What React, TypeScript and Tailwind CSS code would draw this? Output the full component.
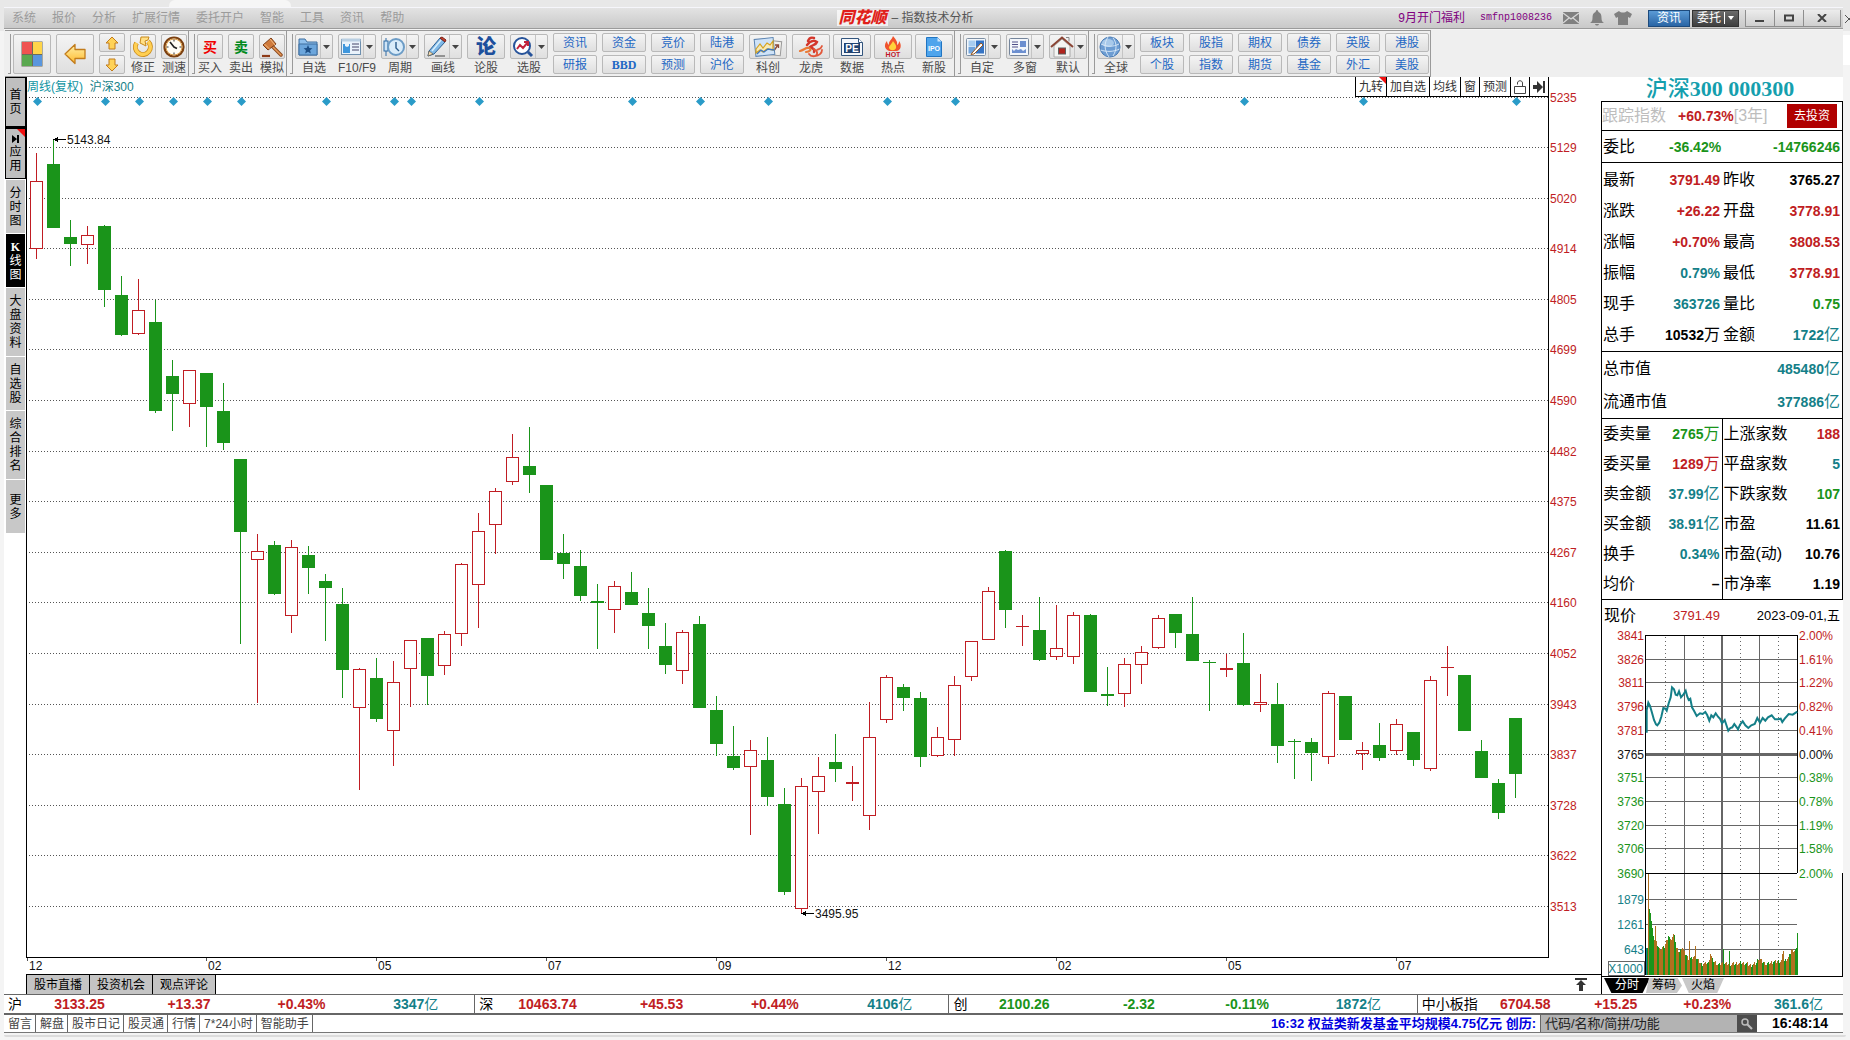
import type { ReactNode } from "react";

const CJK = "font-['Liberation_Sans','Noto_Sans_CJK_SC',sans-serif]";

/* ---------- data ---------- */

type Candle = ["R" | "G", number, number, number, number];

// colour, high, body top, body bottom, low
const candles: Candle[] = [
  ["R", 153, 181, 249, 259], ["G", 140, 164, 228, 228], ["G", 220, 237, 244, 266], ["R", 226, 235, 245, 264],
  ["G", 225, 226, 290, 307], ["G", 276, 295, 335, 336], ["R", 279, 310, 334, 335], ["G", 300, 322, 411, 413],
  ["G", 360, 376, 394, 431], ["R", 370, 370, 404, 427], ["G", 373, 373, 407, 447], ["G", 383, 411, 443, 450],
  ["G", 459, 459, 532, 644], ["R", 534, 551, 560, 703], ["G", 541, 545, 594, 595], ["R", 540, 547, 616, 633],
  ["G", 546, 555, 568, 594], ["G", 574, 581, 588, 641], ["G", 588, 604, 670, 698], ["R", 668, 669, 708, 790],
  ["G", 658, 678, 719, 722], ["R", 661, 682, 731, 766], ["R", 640, 640, 669, 707], ["G", 638, 638, 676, 705],
  ["R", 631, 634, 666, 675], ["R", 563, 564, 634, 646], ["R", 513, 531, 585, 628], ["R", 488, 491, 525, 554],
  ["R", 434, 457, 482, 485], ["G", 427, 466, 475, 493], ["G", 485, 485, 560, 560], ["G", 534, 553, 564, 579],
  ["G", 550, 566, 596, 601], ["G", 584, 601, 603, 649], ["R", 581, 586, 610, 633], ["G", 572, 592, 605, 605],
  ["G", 588, 613, 626, 649], ["G", 623, 646, 665, 674], ["R", 630, 632, 671, 684], ["G", 616, 624, 708, 708],
  ["G", 696, 710, 744, 756], ["G", 726, 756, 768, 770], ["R", 740, 750, 767, 835], ["G", 737, 760, 797, 806],
  ["G", 788, 804, 892, 895], ["R", 778, 786, 909, 913], ["R", 757, 776, 792, 834], ["G", 734, 762, 769, 782],
  ["R", 766, 782, 784, 801], ["R", 702, 737, 816, 830], ["R", 675, 677, 720, 723], ["G", 684, 687, 698, 711],
  ["G", 692, 698, 757, 767], ["R", 727, 737, 756, 757], ["R", 676, 685, 740, 756], ["R", 641, 641, 677, 681],
  ["R", 587, 591, 640, 640], ["G", 550, 551, 610, 628], ["R", 615, 626, 627, 646], ["G", 597, 630, 660, 661],
  ["R", 605, 648, 657, 660], ["R", 612, 615, 657, 664], ["G", 614, 615, 692, 692], ["G", 667, 694, 696, 706],
  ["R", 658, 664, 694, 707], ["R", 646, 652, 665, 684], ["R", 615, 618, 648, 649], ["G", 614, 614, 633, 648],
  ["G", 597, 634, 661, 661], ["G", 660, 662, 663, 711], ["R", 654, 668, 670, 677], ["G", 633, 663, 705, 706],
  ["R", 674, 702, 705, 712], ["G", 683, 704, 746, 763], ["G", 739, 741, 742, 779], ["G", 738, 742, 753, 781],
  ["R", 691, 693, 757, 764], ["G", 696, 696, 740, 740], ["R", 742, 750, 754, 770], ["G", 723, 745, 758, 761],
  ["R", 719, 724, 751, 755], ["G", 732, 732, 760, 766], ["R", 676, 680, 769, 771], ["R", 646, 667, 668, 696],
  ["G", 675, 675, 731, 731], ["G", 740, 751, 778, 778], ["G", 779, 783, 813, 819], ["G", 718, 718, 774, 798],
];

const gridLines: [number, string][] = [
  [97, "5235"], [147, "5129"], [198, "5020"], [248, "4914"], [299, "4805"], [349, "4699"], [400, "4590"],
  [451, "4482"], [501, "4375"], [552, "4267"], [602, "4160"], [653, "4052"], [704, "3943"], [754, "3837"],
  [805, "3728"], [855, "3622"], [906, "3513"],
];

const eventWeeks = [0, 4, 6, 8, 10, 12, 17, 21, 22, 26, 35, 39, 43, 50, 54, 71, 78, 87];

const months: [number, string][] = [
  [27, "12"], [206, "02"], [376, "05"], [546, "07"], [716, "09"], [886, "12"], [1056, "02"], [1226, "05"], [1396, "07"],
];

const menus = ["系统", "报价", "分析", "扩展行情", "委托开户", "智能", "工具", "资讯", "帮助"];

const RED = "text-[#c01d23]";
const GREEN = "text-[#1a941a]";
const TEAL = "text-[#147f88]";
const BLACK = "text-black";

/* ---------- toolbar icons ---------- */

function Svg({ children, w = 24, h = 22 }: { children: ReactNode; w?: number; h?: number }) {
  return (
    <svg width={w} height={h} viewBox={`0 0 ${w} ${h}`} fill="none" aria-hidden="true">
      {children}
    </svg>
  );
}

const Blocks = () => (
  <Svg w={22} h={26}>
    <rect x="0.5" y="0.5" width="21" height="25" fill="#6b6b5a" />
    <rect x="1" y="1" width="10" height="12" fill="#ef5350" />
    <rect x="12" y="1" width="9" height="12" fill="#ffd54a" />
    <rect x="1" y="14" width="10" height="11" fill="#5aa84f" />
    <rect x="12" y="14" width="9" height="11" fill="#5a96dd" />
  </Svg>
);
const ArrowLeft = () => (
  <Svg w={24} h={24}>
    <defs>
      <linearGradient id="gold" x1="0" y1="0" x2="0" y2="1">
        <stop offset="0" stopColor="#fff0a8" />
        <stop offset="1" stopColor="#ffba2e" />
      </linearGradient>
    </defs>
    <path d="M2 12 12 2.500v5h10v9H12v5z" fill="url(#gold)" stroke="#c27c1c" strokeWidth="1.300" strokeLinejoin="round" />
  </Svg>
);
const ArrowUp = () => (
  <Svg w={14} h={14}>
    <path d="M7 1 13 7h-3v6H4V7H1z" fill="#ffd257" stroke="#c27c1c" strokeLinejoin="round" />
  </Svg>
);
const ArrowDown = () => (
  <Svg w={14} h={14}>
    <path d="M7 13 1 7h3V1h6v6h3z" fill="#ffd257" stroke="#c27c1c" strokeLinejoin="round" />
  </Svg>
);
const Refresh = () => (
  <Svg w={22} h={22}>
    <path d="M4.500 7a7.500 7.500 0 1 0 11.500-1.500" stroke="#c98a1a" strokeWidth="5" />
    <path d="M4.500 7a7.500 7.500 0 1 0 11.500-1.500" stroke="#ffcf52" strokeWidth="3.400" />
    <path d="M9 1h8l-1 3-3 1 1 5-6-3z" fill="#ffdf86" stroke="#c98a1a" strokeLinejoin="round" />
  </Svg>
);
const Clock = () => (
  <Svg w={22} h={22}>
    <circle cx="11" cy="11" r="9.500" fill="#fffdf6" stroke="#7c4010" strokeWidth="2.200" />
    <circle cx="11" cy="11" r="8" stroke="#e0a04a" strokeWidth="1" />
    <path d="M11 3.500v2M11 16.500v2M3.500 11h2M16.500 11h2" stroke="#333" />
    <path d="M7 6l4 5 3 1.500" stroke="#222" strokeWidth="1.600" />
  </Svg>
);
const Gavel = () => (
  <Svg w={22} h={22}>
    <path d="m10 9 10 10" stroke="#8d4a20" strokeWidth="3.500" strokeLinecap="round" />
    <path d="m10 9 10 10" stroke="#e79a57" strokeWidth="1.500" strokeLinecap="round" />
    <path d="m2 9 8-7 5 6-8 6z" fill="#cf7a3c" stroke="#7f3f18" strokeLinejoin="round" />
    <path d="m3.500 8 5 5M9 3l5 6" stroke="#f3bd83" />
    <path d="M1 20h8" stroke="#8d3b18" strokeWidth="2.200" />
  </Svg>
);
const Folder = () => (
  <Svg w={20} h={20}>
    <path d="M1 2h6l2 3h10v13H1z" fill="#8fc0ec" stroke="#3f6f9f" />
    <path d="M1 7h18v11H1z" fill="#6ca6dc" stroke="#3f6f9f" />
    <path d="m10 8 1.300 2.900 3.100.300-2.300 2.100.700 3.100-2.800-1.600-2.800 1.600.700-3.100-2.300-2.100 3.100-.300z" fill="#1d4f86" />
  </Svg>
);
const Report = () => (
  <Svg w={20} h={20}>
    <rect x="0.500" y="2.500" width="19" height="15" fill="#eaf3fb" stroke="#6d8fae" />
    <rect x="0.500" y="1.500" width="19" height="3" fill="#b9cfe2" />
    <path d="M2 7h2v2l2 1 2-1V7h1v9H2z" fill="#3f97dd" />
    <path d="M11 7h7M11 10h7M11 13h7" stroke="#446" />
  </Svg>
);
const Period = () => (
  <Svg w={22} h={20}>
    <path d="M3 1v18" stroke="#2d6ba5" />
    <rect x="1" y="4" width="4" height="10" fill="#cfe4f6" stroke="#2d6ba5" />
    <circle cx="13" cy="10" r="8" fill="#d9ecfa" stroke="#6c9cc6" strokeWidth="2" />
    <path d="M13 5v6l3 3" stroke="#2b5c8c" strokeWidth="1.400" />
  </Svg>
);
const Pencil = () => (
  <Svg w={22} h={22}>
    <path d="M3 15 14 2l5 4L8 18l-6 2z" fill="#7fb9e8" stroke="#2d5f92" />
    <path d="m14 2 2-1 4 3-1 2z" fill="#c8402d" stroke="#7b2318" />
    <path d="M3 15 2 20l5-2z" fill="#f5deb4" stroke="#60513a" strokeWidth="0.600" />
    <path d="m6 15 9-11" stroke="#d9effc" strokeWidth="1.500" />
    <path d="M9 20h10" stroke="#444" />
  </Svg>
);
const Magnify = () => (
  <Svg w={22} h={22}>
    <circle cx="10" cy="10" r="8" fill="#fff" stroke="#27539a" strokeWidth="2" />
    <path d="m16 16 4 4" stroke="#27539a" strokeWidth="3" />
    <path d="m5 13 3-4 3 3 5-6M12 6h4v4" stroke="#c2233c" strokeWidth="2" />
  </Svg>
);
const Charts = () => (
  <Svg w={30} h={22}>
    <rect x="14" y="5" width="14" height="14" transform="rotate(6 21 12)" fill="#f2f0ec" stroke="#999" />
    <path d="m20 16 5-7M22 9h3.500v3" stroke="#8b4a3a" strokeWidth="1.300" />
    <rect x="2" y="2.500" width="19" height="17" transform="rotate(-6 11 11)" fill="#cfe3f8" stroke="#5b83b0" />
    <path d="m3 13 4-5 3 4 4-5 3 2 3-4v9l-6-1-4 3-3-2-4 3z" fill="#f6eab8" stroke="#d7a21d" strokeWidth="1.200" />
    <path d="m4 18 4-4 3 2 4-3 6 1" stroke="#3f76bc" strokeWidth="1.300" />
  </Svg>
);
const Dragon = () => (
  <Svg w={28} h={22}>
    <path d="M11 5c1-3 3-4 6-3M10 9c3-4 7-5 10-3-1 3-5 3-7 5 3 1 5 3 4 5" stroke="#d3362b" strokeWidth="2.400" strokeLinecap="round" />
    <path d="M3 15c4-1 6-4 9-3s1 4-3 4" stroke="#ea7a35" strokeWidth="2.200" strokeLinecap="round" />
    <path d="M12 18c2 3 7 3 8 0s-2-4-3-5M20 14c2-1 4-1 5-4M18 20c4 0 7-3 7-6" stroke="#e2573a" strokeWidth="1.800" strokeLinecap="round" />
  </Svg>
);
const PE = () => (
  <Svg w={24} h={20}>
    <path d="M1.500 1.500h17l4 4v13h-21z" fill="#f4f7fb" stroke="#33557d" />
    <path d="M18.500 1.500v4h4" fill="#fff" stroke="#33557d" />
    <rect x="4" y="6" width="16" height="10" fill="#1f4270" />
    <text x="12" y="14.500" fontSize="10" fontWeight="700" fill="#fff" textAnchor="middle" fontFamily="Liberation Sans">PE</text>
  </Svg>
);
const Hot = () => (
  <Svg w={22} h={22}>
    <path d="M11 0c2 3 5 5 4 9 2-1 2-3 2-4 3 4 2 9-2 10H7C2 13 2 8 5 5c0 2 1 3 2 4C6 5 10 4 11 0z" fill="#f0532d" />
    <path d="M11 5c1 2 4 4 3 7-1 3-6 3-7 0-.500-2 3-4 4-7z" fill="#ffd23a" />
    <text x="11" y="21" fontSize="7" fontWeight="700" fill="#c0182a" textAnchor="middle" fontFamily="Liberation Sans">HOT</text>
  </Svg>
);
const Ipo = () => (
  <Svg w={18} h={22}>
    <path d="M1.500 1.500h11l4 4v15h-15z" fill="#4ea4ec" stroke="#2175c2" />
    <path d="M12.500 1.500v4h4z" fill="#cbe5fb" />
    <text x="9" y="15" fontSize="7" fontWeight="700" fill="#fff" textAnchor="middle" fontFamily="Liberation Sans">IPO</text>
  </Svg>
);
const Custom = () => (
  <Svg w={20} h={20}>
    <rect x="0.500" y="1.500" width="19" height="17" rx="1" fill="#f3f7fb" stroke="#7c8ea3" />
    <rect x="2.500" y="3.500" width="7" height="6" fill="#a8cdf0" />
    <rect x="10" y="3.500" width="8" height="13" fill="#3674c4" />
    <rect x="2.500" y="10" width="7" height="6.500" fill="#6fa3dd" />
    <path d="m6 16 9-10 2 2-9 9-3 .500z" fill="#fff" stroke="#9a5a22" />
  </Svg>
);
const Windows = () => (
  <Svg w={20} h={20}>
    <rect x="0.500" y="1.500" width="19" height="17" rx="1" fill="#f3f6fb" stroke="#75859b" />
    <path d="M3 5h6M3 7.500h6M3 10h6" stroke="#50508a" />
    <rect x="11" y="4" width="6" height="6" fill="#6c8fd0" />
    <path d="M3 16v-4l2 2 2-2 2 1 3-1 2 2 3-2v4z" fill="#6c8fd0" />
  </Svg>
);
const House = () => (
  <Svg w={24} h={22}>
    <path d="M4 10v11h16V10l-8-7z" fill="#f4f4f2" stroke="#aaa" />
    <path d="M1 11 12 1.500 23 11" stroke="#8a4434" strokeWidth="2" />
    <path d="M16 1.500h3v4" stroke="#888" />
    <rect x="8.500" y="12" width="7" height="6" fill="#b0231c" stroke="#5e5e5e" />
  </Svg>
);
const Globe = () => (
  <Svg w={22} h={22}>
    <circle cx="11" cy="11" r="10" fill="#6d9dd3" stroke="#4a7cb5" />
    <ellipse cx="9" cy="7" rx="6" ry="4" fill="#a8c9ea" />
    <path d="M2 8c6 3 12 3 18 0M1.500 14c6 2 13 2 19-1M9 1c-4 6-4 13 1 20M14 1.500c4 6 4 12 0 18.500" stroke="#dcebf8" strokeWidth="0.900" />
  </Svg>
);

/* ---------- toolbar parts ---------- */

const face = "border border-[#b9b9b9] rounded-[2px] bg-linear-to-b from-[#f4f4f4] to-[#dfdfdf] flex items-center justify-center";

function Tool({ label, icon, drop, narrow }: { label: string; icon: ReactNode; drop?: boolean; narrow?: boolean }) {
  return (
    <button className={`flex flex-col items-center ${narrow ? "w-[26px]" : "w-[38px]"}`}>
      <span className={`${face} h-[25px] w-full`}>
        <span className="flex flex-1 items-center justify-center">{icon}</span>
        {drop && (
          <span className="flex h-full w-3 items-center justify-center border-l border-[#c4c4c4]">
            <svg width="7" height="4" viewBox="0 0 7 4" aria-hidden="true"><path d="M0 0h7L3.500 4z" fill="#444" /></svg>
          </span>
        )}
      </span>
      <span className="mt-[3px] whitespace-nowrap text-xs leading-3 text-[#4a4a4a]">{label}</span>
    </button>
  );
}

function TextPair({ items }: { items: [string, string] }) {
  return (
    <div className="-mt-px flex flex-col gap-[3px]">
      {items.map((t) => (
        <button key={t} className={`${face} h-[19px] w-11 text-xs leading-none text-[#1f68c4] ${t === "BBD" ? "font-['Liberation_Serif',serif] font-bold" : ""}`}>
          {t}
        </button>
      ))}
    </div>
  );
}

function Group({ children }: { children: ReactNode }) {
  return (
    <div className="flex h-[47px] items-start gap-[2px] border-t border-r border-b border-[#9a9a9a] pt-[3px] pr-px pl-[3px]">
      <span className="h-10 w-[3px] border-r border-b border-[#9a9a9a]" />
      <div className="flex items-start gap-[5px]">{children}</div>
    </div>
  );
}

function Toolbar() {
  return (
    <div className="flex h-[47px] shrink-0 overflow-hidden bg-[#efefef] pl-px">
      <Group>
        <button aria-label="主页" className={`${face} h-10 w-[38px]`}><Blocks /></button>
        <button aria-label="后退" className={`${face} h-10 w-[38px]`}><ArrowLeft /></button>
        <div className="-mt-px flex flex-col gap-[3px]">
          <button aria-label="上一个" className={`${face} h-[19px] w-[26px]`}><ArrowUp /></button>
          <button aria-label="下一个" className={`${face} h-[19px] w-[26px]`}><ArrowDown /></button>
        </div>
        <Tool narrow label="修正" icon={<Refresh />} />
        <Tool narrow label="测速" icon={<Clock />} />
      </Group>
      <Group>
        <Tool narrow label="买入" icon={<span className="text-sm font-bold text-[#f00000]">买</span>} />
        <Tool narrow label="卖出" icon={<span className="text-sm font-bold text-[#008a1c]">卖</span>} />
        <Tool narrow label="模拟" icon={<Gavel />} />
      </Group>
      <Group>
        <Tool drop label="自选" icon={<Folder />} />
        <Tool drop label="F10/F9" icon={<Report />} />
        <Tool drop label="周期" icon={<Period />} />
        <Tool drop label="画线" icon={<Pencil />} />
        <Tool label="论股" icon={<span className="text-xl font-black leading-5 text-[#1c4f9c]">论</span>} />
        <Tool drop label="选股" icon={<Magnify />} />
        <TextPair items={["资讯", "研报"]} />
        <TextPair items={["资金", "BBD"]} />
        <TextPair items={["竞价", "预测"]} />
        <TextPair items={["陆港", "沪伦"]} />
        <Tool label="科创" icon={<Charts />} />
        <div className="flex gap-[3px]">
          <Tool label="龙虎" icon={<Dragon />} />
          <Tool label="数据" icon={<PE />} />
          <Tool label="热点" icon={<Hot />} />
          <Tool label="新股" icon={<Ipo />} />
        </div>
      </Group>
      <Group>
        <Tool drop label="自定" icon={<Custom />} />
        <Tool drop label="多窗" icon={<Windows />} />
        <Tool drop label="默认" icon={<House />} />
      </Group>
      <Group>
        <Tool drop label="全球" icon={<Globe />} />
        <TextPair items={["板块", "个股"]} />
        <TextPair items={["股指", "指数"]} />
        <TextPair items={["期权", "期货"]} />
        <TextPair items={["债券", "基金"]} />
        <TextPair items={["英股", "外汇"]} />
        <TextPair items={["港股", "美股"]} />
      </Group>
    </div>
  );
}

/* ---------- title bar ---------- */

function TitleBar() {
  const winBtn = "flex h-[17px] items-center justify-center border-l border-b border-[#8e8e8e] bg-linear-to-b from-[#ececec] to-[#cfcfcf]";
  return (
    <header className="grid h-[22px] shrink-0 grid-cols-[1fr_auto_1fr] items-center border-t border-b border-t-[#f6f6fb] border-b-[#9b9b9b] bg-linear-to-b from-[#e3e3e3] to-[#c9c9c9]">
      <nav className="flex gap-4 pl-2 text-xs text-[#9b9b9b]">
        {menus.map((m) => (
          <button key={m} className="leading-4">{m}</button>
        ))}
      </nav>
      <h1 className="flex items-center gap-1 pr-9 text-xs text-[#555]">
        <span className="bg-white/70 px-px text-base leading-4 font-black text-[#e01f1a] italic">同花顺</span>
        <span>– 指数技术分析</span>
      </h1>
      <div className="flex items-center justify-end pr-[2px] text-xs">
        <a href="#promo" className="mr-[15px] text-[#800080]">9月开门福利</a>
        <a href="#user" className="mr-[11px] font-['Liberation_Mono',monospace] text-[10px] text-[#800080]">smfnp1008236</a>
        <button aria-label="邮件" className="mr-[11px]">
          <svg width="16" height="12" viewBox="0 0 16 12" aria-hidden="true"><path d="M0 0h16v12H0z" fill="#808080" /><path d="m0 1 8 6 8-6M0 11l6-5M16 11l-6-5" fill="none" stroke="#d8d8d8" strokeWidth="1.200" /></svg>
        </button>
        <button aria-label="提醒" className="mr-[10px]">
          <svg width="14" height="16" viewBox="0 0 14 16" aria-hidden="true"><path d="M7 0c1 0 1 1 1.500 2C11 3 11.500 5 11.500 8c0 3 1 4 2.500 5H0c1.500-1 2.500-2 2.500-5 0-3 .500-5 3-6C6 1 6 0 7 0zM5 14h4c-.500 2-3.500 2-4 0z" fill="#808080" /></svg>
        </button>
        <button aria-label="皮肤" className="mr-4">
          <svg width="18" height="14" viewBox="0 0 18 14" aria-hidden="true"><path d="M5 0c2 2 6 2 8 0l5 3-2 4-2-1v8H4V6L2 7 0 3z" fill="#808080" /></svg>
        </button>
        <button className="mr-[2px] h-[17px] w-[42px] border border-[#1d4a7c] bg-linear-to-b from-[#5b9bd6] to-[#2a65a5] leading-[14px] text-white">资讯</button>
        <button className="mr-[6px] flex h-[17px] w-[47px] items-center justify-center gap-[3px] border border-[#333] bg-linear-to-b from-[#6b6b6b] to-[#3f3f3f] leading-[14px] text-white">
          委托
          <span className="h-3 w-px bg-white" />
          <svg width="6" height="4" viewBox="0 0 6 4" aria-hidden="true"><path d="M0 0h6L3 4z" fill="#fff" /></svg>
        </button>
        <button aria-label="最小化" className={`${winBtn} w-[29px]`}>
          <svg width="10" height="10" viewBox="0 0 10 10" aria-hidden="true"><path d="M0 7h9v2H0z" fill="#444" /></svg>
        </button>
        <button aria-label="最大化" className={`${winBtn} w-[29px]`}>
          <svg width="10" height="8" viewBox="0 0 10 8" aria-hidden="true"><path d="M1 1.500h8v5H1z" fill="none" stroke="#444" strokeWidth="2" /></svg>
        </button>
        <button aria-label="关闭" className={`${winBtn} w-[38px] border-r`}>
          <svg width="10" height="8" viewBox="0 0 10 8" aria-hidden="true"><path d="m1 0 8 8M9 0 1 8" stroke="#444" strokeWidth="2" /></svg>
        </button>
      </div>
    </header>
  );
}

/* ---------- left rail ---------- */

const rail: { text: string; cls: string; app?: boolean }[] = [
  { text: "首页", cls: "h-[50px] border border-black bg-[#bfbfbf]" },
  { text: "应用", cls: "h-[52px] border border-t-2 border-black bg-[#bfbfbf]", app: true },
  { text: "分时图", cls: "mx-px mt-px h-[53px] bg-[#c8c8c8]" },
  { text: "K线图", cls: "mx-px mt-px h-[53px] bg-black text-white" },
  { text: "大盘资料", cls: "mx-px mt-px h-[68px] bg-[#c8c8c8]" },
  { text: "自选股", cls: "mx-px mt-px h-[53px] bg-[#c8c8c8]" },
  { text: "综合排名", cls: "mx-px mt-px h-[68px] bg-[#c8c8c8]" },
  { text: "更多", cls: "mx-px mt-px h-[53px] bg-[#c8c8c8]" },
];

function Rail() {
  return (
    <nav className="flex w-[22px] shrink-0 flex-col pl-px text-xs leading-[14px]">
      {rail.map((r) => (
        <button key={r.text} className={`relative flex flex-col items-center justify-center ${r.cls}`}>
          {r.app && (
            <>
              <span className="absolute top-0 right-0 border-t-8 border-l-8 border-t-[#f01010] border-l-transparent" />
              <svg width="8" height="8" viewBox="0 0 8 8" className="mb-[2px]" aria-hidden="true"><path d="M0 0v8l5-4zM5 0h2v8H5z" fill="#000" /></svg>
            </>
          )}
          {[...r.text].map((ch) => (
            <span key={ch} className={ch === "K" ? "font-['Liberation_Serif',serif] font-bold" : ""}>{ch}</span>
          ))}
        </button>
      ))}
    </nav>
  );
}

/* ---------- main chart ---------- */

function Arrow({ x, y }: { x: number; y: number }) {
  return <path d={`M${x} ${y + 0.5}h13M${x + 4} ${y - 2}v5M${x + 2} ${y - 1}v3M${x + 3} ${y - 1}v3`} stroke="#000" fill="none" />;
}

function KChart() {
  return (
    <svg className="block min-h-0 w-full flex-1 overflow-visible" viewBox="26 97 1575 877" preserveAspectRatio="none" role="img" aria-label="沪深300 周线" fontFamily="Liberation Sans" fontSize="12">
      <g shapeRendering="crispEdges">
        {gridLines.map(([y]) => (
          <path key={y} d={`M29 ${y + 0.5}H1548`} stroke="#555" strokeDasharray="1 2" />
        ))}
        {candles.map(([c, hi, top, bot, lo], i) => {
          const x = 36 + 17 * i;
          const color = c === "R" ? "#c01d23" : "#1a941a";
          const hollow = c === "R" && bot - top > 2;
          return (
            <g key={i}>
              <path d={`M${x + 0.5} ${hi}V${lo}`} stroke={color} />
              {hollow ? (
                <rect x={x - 5.5} y={top + 0.5} width="12" height={bot - top - 1} fill="#fff" stroke={color} />
              ) : (
                <rect x={x - 6} y={top} width="13" height={Math.max(bot - top, 1)} fill={color} />
              )}
            </g>
          );
        })}
        <path d="M26.5 97V957.5H1548.5V97" stroke="#000" fill="none" />
        {months.map(([x]) => (
          <path key={x} d={`M${x + 0.5} 958v3`} stroke="#555" />
        ))}
        <Arrow x={53} y={139} />
        <Arrow x={801} y={913} />
      </g>
      {eventWeeks.map((w) => (
        <path key={w} d={`M${37.5 + 17 * w} 97l4.5 4.5-4.500 4.5-4.500-4.5z`} fill="#2a9bc8" />
      ))}
      {gridLines.map(([y, t]) => (
        <text key={t} x="1550" y={y + 5} fill="#c01d23">{t}</text>
      ))}
      {months.map(([x, t]) => (
        <text key={x} x={x + 2} y="970" fill="#111">{t}</text>
      ))}
      <text x="67" y="144" fill="#111">5143.84</text>
      <text x="815" y="918" fill="#111">3495.95</text>
    </svg>
  );
}

function ChartArea() {
  const tool = "flex h-full items-center border-l border-b border-black px-[3px]";
  return (
    <section className="flex min-w-0 flex-1 flex-col">
      <div className="flex h-5 shrink-0 items-center justify-between border-l border-black pr-[52px] text-xs">
        <h2 className="text-[#0f95a3]">周线(复权)&nbsp; <span className="text-[#147f88]">沪深300</span></h2>
        <div className="flex h-full border-r border-black text-[#333]">
          <button className={`${tool} relative`}>
            九转
            <span className="absolute top-0 right-0 border-t-[7px] border-l-[7px] border-t-[#f01010] border-l-transparent" />
          </button>
          <button className={tool}>加自选</button>
          <button className={tool}>均线</button>
          <button className={tool}>窗</button>
          <button className={tool}>预测</button>
          <button className={tool} aria-label="锁定">
            <svg width="12" height="14" viewBox="0 0 12 14" fill="none" stroke="#444" aria-hidden="true"><path d="M.500 6.500h11v7H.500zM3.500 4.500V3c0-3 5-3 5 0v3.500" /></svg>
          </button>
          <button className={tool} aria-label="移到最新">
            <svg width="12" height="12" viewBox="0 0 12 12" fill="#333" aria-hidden="true"><path d="M0 4h4V0l6 6-6 6V8H0zM10 0h2v12h-2z" /></svg>
          </button>
        </div>
      </div>
      <KChart />
      <div className="flex h-5 shrink-0 items-stretch justify-between border-t border-black">
        <div className="flex border-l border-black text-xs">
          {["股市直播", "投资机会", "观点评论"].map((t) => (
            <button key={t} className="w-[63px] border-r border-black bg-[#c4c4c4]">{t}</button>
          ))}
        </div>
        <button aria-label="展开" className="mr-3 flex w-4 items-center justify-center">
          <svg width="12" height="13" viewBox="0 0 12 13" fill="#333" aria-hidden="true"><path d="M0 0h12v2H0zM6 2l5 5H8v6H4V7H1z" /></svg>
        </button>
      </div>
    </section>
  );
}

/* ---------- quote panel ---------- */

type Cell = [string, string, string, string?];

function QuoteRows({ rows, h, split }: { rows: [Cell, Cell?][]; h: string; split?: boolean }) {
  const label = "text-left text-base leading-5 font-normal whitespace-nowrap";
  const unit = (u?: string) => (u ? <span className="text-base leading-5 font-normal">{u}</span> : null);
  return (
    <table className="w-full table-fixed border-collapse">
      <tbody>
        {rows.map(([a, b]) => (
          <tr key={a[0]} className={h}>
            <td className={`p-0 ${split ? "border-r border-black" : ""}`}>
              <div className="flex items-center justify-between pr-[2px] pl-px">
                <span className={label}>{a[0]}</span>
                <span className={`flex items-center text-sm leading-5 font-bold ${a[2]}`}>{a[1]}{unit(a[3])}</span>
              </div>
            </td>
            {b && (
              <td className="p-0">
                <div className="flex items-center justify-between pr-[2px] pl-px">
                  <span className={label}>{b[0]}</span>
                  <span className={`flex items-center text-sm leading-5 font-bold ${b[2]}`}>{b[1]}{unit(b[3])}</span>
                </div>
              </td>
            )}
          </tr>
        ))}
      </tbody>
    </table>
  );
}

const pricePath: [number, number][] = [
  [170, 338], [170, 270], [175, 248], [180, 258], [186, 278], [192, 300], [198, 313], [202, 316], [208, 308], [214, 290],
  [220, 264], [226, 266], [230, 272], [236, 250], [242, 232], [246, 202], [252, 208], [257, 224], [262, 226], [267, 214],
  [273, 232], [280, 224], [287, 212], [292, 230], [296, 240], [301, 236], [306, 262], [312, 272], [320, 288], [330, 280],
  [338, 282], [346, 276], [352, 286], [358, 302], [364, 286], [370, 292], [377, 280], [384, 290], [390, 296], [396, 310],
  [404, 300], [410, 318], [415, 332], [421, 324], [427, 322], [433, 312], [440, 322], [444, 328], [450, 314], [458, 304],
  [466, 316], [475, 324], [484, 316], [494, 312], [502, 294], [510, 308], [518, 294], [526, 302], [534, 292], [545, 286],
  [555, 298], [565, 298], [572, 296], [577, 306], [584, 296], [596, 282], [608, 284], [622, 275],
];

// minute offset, volume height
const volumeShape: [number, number][] = [
  [0, 27], [1, 27], [2, 101], [3, 66], [4, 62], [6, 46], [8, 36], [9, 48], [10, 32], [13, 26], [18, 28], [20, 34], [22, 40],
  [24, 34], [28, 42], [30, 26], [33, 23], [36, 28], [38, 22], [42, 17], [43, 35], [44, 16], [48, 18], [49, 31], [50, 17],
  [55, 11], [62, 12], [64, 22], [66, 15], [72, 10], [76, 12], [77, 28], [78, 12], [82, 11], [83, 23], [84, 11], [95, 12],
  [105, 10], [110, 12], [112, 17], [115, 14], [120, 11], [126, 13], [135, 14], [137, 25], [138, 14], [142, 17], [145, 25], [150, 25], [151, 42],
];

function volumeAt(m: number) {
  const k = volumeShape.findIndex(([x]) => x >= m);
  if (k <= 0) return volumeShape[0][1];
  const [x0, y0] = volumeShape[k - 1];
  const [x1, y1] = volumeShape[k];
  const wobble = ((m * 37) % 7) - 3;
  return Math.round(y0 + ((y1 - y0) * (m - x0)) / (x1 - x0) + (m > 4 && m < 151 ? wobble * 0.6 : 0));
}

const leftScale: [number, string, string][] = [
  [635, "3841", "#c01d23"], [659, "3826", "#c01d23"], [682, "3811", "#c01d23"], [706, "3796", "#c01d23"], [730, "3781", "#c01d23"],
  [754, "3765", "#111"], [777, "3751", "#1a941a"], [801, "3736", "#1a941a"], [825, "3720", "#1a941a"], [848, "3706", "#1a941a"],
  [873, "3690", "#1a941a"], [899, "1879", "#147f88"], [924, "1261", "#147f88"], [949, "643", "#147f88"],
];
const rightScale = ["2.00%", "1.61%", "1.22%", "0.82%", "0.41%", "0.00%", "0.38%", "0.78%", "1.19%", "1.58%", "2.00%"];

function MinuteChart() {
  return (
    <svg className="block min-h-0 w-full flex-1" viewBox="1602 630 241 347" preserveAspectRatio="none" role="img" aria-label="分时走势" fontFamily="Liberation Sans" fontSize="12">
      <g shapeRendering="crispEdges" stroke="#666" fill="none">
        {leftScale.slice(1).map(([y]) => (
          <path key={y} d={`M1646 ${y + 0.5}H1797`} />
        ))}
        <path d="M1646 754.5H1797" strokeWidth="3" />
        <path d="M1722 635V975" strokeWidth="2" />
        <path d="M1684.5 635V975M1759.5 635V975" />
        <path d="M1665.5 637V975M1703.5 637V975M1740.5 637V975M1778.5 637V975" strokeDasharray="1 3" />
        {Array.from({ length: 152 }, (_, m) => (
          <path key={m} d={`M${1646.5 + m} 975v-${volumeAt(m)}`} stroke={m < 1 ? "#137a9a" : m === 151 || (m * 13) % 11 < 4 || (m > 2 && m < 8) ? "#1a941a" : "#b0701f"} />
        ))}
        <path d="M1645.5 975V635.5H1797.5V873M1645 873.5H1797" stroke="#000" />
        <path d="M1842.5 873V976.5H1602" stroke="#000" />
        <rect x="1608.5" y="961.5" width="36" height="14" fill="#fff" />
      </g>
      <polyline points={pricePath.map(([x, y]) => `${(1590 + x / 3).toFixed(1)},${(620 + y / 3).toFixed(1)}`).join(" ")} fill="none" stroke="#147f88" strokeWidth="2" />
      {leftScale.map(([y, t, c]) => (
        <text key={t} x="1644" y={y + 5} textAnchor="end" fill={c}>{t}</text>
      ))}
      {rightScale.map((t, i) => (
        <text key={i} x="1799" y={leftScale[i][0] + 5} fill={leftScale[i][2]}>{t}</text>
      ))}
      <text x="1643" y="973" textAnchor="end" fill="#147f88">X1000</text>
    </svg>
  );
}

function QuotePanel() {
  return (
    <aside className="flex w-[242px] shrink-0 flex-col">
      <h2 className="h-6 pr-1 text-center font-['Liberation_Serif','Noto_Sans_CJK_SC',serif] text-[22px] leading-6 font-bold text-[#159fae]">
        <span className="font-medium">沪深</span>300 000300
      </h2>
      <div className="border border-black">
        <div className="flex h-7 items-center whitespace-nowrap text-[#bdbdbd]">
          <span className="text-base leading-5">跟踪指数</span>
          <b className={`ml-3 text-sm leading-5 ${RED}`}>+60.73%</b>
          <span className="text-base leading-5">[3年]</span>
          <button className="mr-[5px] ml-auto h-6 w-[50px] bg-[#b00000] text-xs text-white">去投资</button>
        </div>
        <div className="flex h-[33px] items-center border-y border-black pr-[2px] pl-px">
          <span className="w-[66px] text-base leading-5">委比</span>
          <b className={`text-sm leading-5 ${GREEN}`}>-36.42%</b>
          <b className={`ml-auto text-sm leading-5 ${GREEN}`}>-14766246</b>
        </div>
        <div className="py-px">
          <QuoteRows
            h="h-[31px]"
            rows={[
              [["最新", "3791.49", RED], ["昨收", "3765.27", BLACK]],
              [["涨跌", "+26.22", RED], ["开盘", "3778.91", RED]],
              [["涨幅", "+0.70%", RED], ["最高", "3808.53", RED]],
              [["振幅", "0.79%", TEAL], ["最低", "3778.91", RED]],
              [["现手", "363726", TEAL], ["量比", "0.75", GREEN]],
              [["总手", "10532", BLACK, "万"], ["金额", "1722", TEAL, "亿"]],
            ]}
          />
        </div>
        <div className="border-y border-black">
          <QuoteRows h="h-[33px]" rows={[[["总市值", "485480", TEAL, "亿"]], [["流通市值", "377886", TEAL, "亿"]]]} />
        </div>
        <QuoteRows
          split
          h="h-[30px]"
          rows={[
            [["委卖量", "2765", GREEN, "万"], ["上涨家数", "188", RED]],
            [["委买量", "1289", RED, "万"], ["平盘家数", "5", TEAL]],
            [["卖金额", "37.99", TEAL, "亿"], ["下跌家数", "107", GREEN]],
            [["买金额", "38.91", TEAL, "亿"], ["市盈", "11.61", BLACK]],
            [["换手", "0.34%", TEAL], ["市盈(动)", "10.76", BLACK]],
            [["均价", "–", BLACK], ["市净率", "1.19", BLACK]],
          ]}
        />
      </div>
      <div className="flex min-h-0 flex-1 flex-col border-l border-black">
        <div className="flex h-[30px] shrink-0 items-center justify-between pt-[2px] pr-[3px] pl-[2px] text-[13px]">
          <span className="text-base leading-5">现价</span>
          <span className={RED}>3791.49</span>
          <span>2023-09-01,五</span>
        </div>
        <MinuteChart />
        <div className="flex h-[17px] shrink-0 items-start pt-px pl-[2px] text-xs leading-[15px]">
          <button className="h-[15px] w-[46px] bg-black text-white [clip-path:polygon(0_0,100%_0,84%_100%,16%_100%)]">分时</button>
          <button className="-ml-1 h-[15px] w-9 bg-[#c8c8c8] [clip-path:polygon(8%_0,88%_0,100%_50%,86%_100%,0_100%)]">筹码</button>
          <button className="h-[15px] w-[42px] bg-[#c8c8c8] [clip-path:polygon(0_0,100%_0,84%_100%,16%_100%)]">火焰</button>
        </div>
      </div>
    </aside>
  );
}

/* ---------- bottom ---------- */

function IndexCell({ name, vals, color, cls }: { name: string; vals: [string, string, string, string]; color: [string, string]; cls: string }) {
  return (
    <div className={`grid items-center text-right text-sm leading-[18px] font-bold ${cls}`}>
      <span className="flex items-center justify-between pl-1">
        <span className="font-normal">{name}</span>
        <span className={color[0]}>{vals[0]}</span>
      </span>
      <span className={color[1]}>{vals[1]}</span>
      <span className={color[1]}>{vals[2]}</span>
      <span className={TEAL}>{vals[3]}<span className="font-normal">亿</span></span>
    </div>
  );
}

function IndexBar() {
  const cols = "grid-cols-[101fr_106fr_115fr_113fr_36fr]";
  return (
    <div className="flex h-[21px] shrink-0 border-t border-b-2 border-[#666] bg-white">
      <IndexCell name="沪" vals={["3133.25", "+13.37", "+0.43%", "3347"]} color={[RED, RED]} cls={`flex-[471] ${cols}`} />
      <IndexCell name="深" vals={["10463.74", "+45.53", "+0.44%", "4106"]} color={[RED, RED]} cls={`flex-[474] border-l border-[#666] ${cols}`} />
      <IndexCell name="创" vals={["2100.26", "-2.32", "-0.11%", "1872"]} color={[GREEN, GREEN]} cls={`flex-[468] border-l border-[#666] ${cols}`} />
      <IndexCell name="中小板指" vals={["6704.58", "+15.25", "+0.23%", "361.6"]} color={[RED, RED]} cls="flex-[426] grid-cols-[133fr_87fr_94fr_92fr_20fr] border-l border-[#666]" />
    </div>
  );
}

function StatusBar() {
  return (
    <footer className="flex h-[18px] shrink-0 items-stretch border-b border-[#777] bg-white text-xs">
      <nav className="flex text-[#444]">
        {["留言", "解盘", "股市日记", "股灵通", "行情", "7*24小时", "智能助手"].map((t) => (
          <button key={t} className="border-r border-[#666] pr-[3px] pl-1 leading-4 whitespace-nowrap">{t}</button>
        ))}
      </nav>
      <a href="#news" className="ml-auto pr-1 text-[13px] leading-[17px] font-bold whitespace-nowrap text-[#0000e0]">
        16:32 权益类新发基金平均规模4.75亿元 创历:
      </a>
      <input
        aria-label="代码/名称/简拼/功能"
        className="w-[197px] border-l border-[#666] bg-[#b3b3b3] pl-1 text-[13px] leading-[17px] outline-none placeholder:text-[#222]"
        placeholder="代码/名称/简拼/功能"
      />
      <button aria-label="搜索" className="flex w-5 items-center justify-center bg-[#4d4d4d]">
        <svg width="12" height="12" viewBox="0 0 12 12" fill="none" stroke="#bbb" aria-hidden="true"><circle cx="4" cy="4" r="3" strokeWidth="1.500" /><path d="m6 6 5 5" strokeWidth="2.200" /></svg>
      </button>
      <time className="w-[86px] text-center text-sm leading-[17px] font-bold text-black">16:48:14</time>
    </footer>
  );
}

export default function App() {
  return (
    <div className={`flex h-screen flex-col bg-[#f4f4f4] text-black ${CJK}`}>
      <div className="h-[7px] shrink-0 bg-[#e8e8e8] pl-[169px]">
        <div className="h-full w-[122px] rounded-t-md bg-[#f6f6f6]" />
      </div>
      <div className="flex min-h-0 flex-1">
        <div className="w-1 shrink-0">
          <div className="h-6 bg-[#e8e8e8]" />
        </div>
        <div className="flex min-h-0 min-w-0 flex-1 flex-col bg-white">
          <TitleBar />
          <div className="h-px shrink-0 bg-[#f4f4f4]" />
          <Toolbar />
          <main className="flex min-h-0 flex-1">
            <Rail />
            <ChartArea />
            <QuotePanel />
          </main>
          <IndexBar />
          <StatusBar />
        </div>
        <div className="w-[7px] shrink-0">
          <div className="flex h-6 items-center justify-end bg-[#e8e8e8]">
            <svg width="5" height="8" viewBox="0 0 5 8" aria-hidden="true"><path d="m0 0 8 8M0 8l8-8" stroke="#555" fill="none" /></svg>
          </div>
          <div className="mt-1 h-[30px] bg-white" />
        </div>
      </div>
      <div className="mx-1 h-[7px] shrink-0 pt-[2px]">
        <div className="h-[2px] rounded-b bg-[#dcdcdc]" />
      </div>
    </div>
  );
}
